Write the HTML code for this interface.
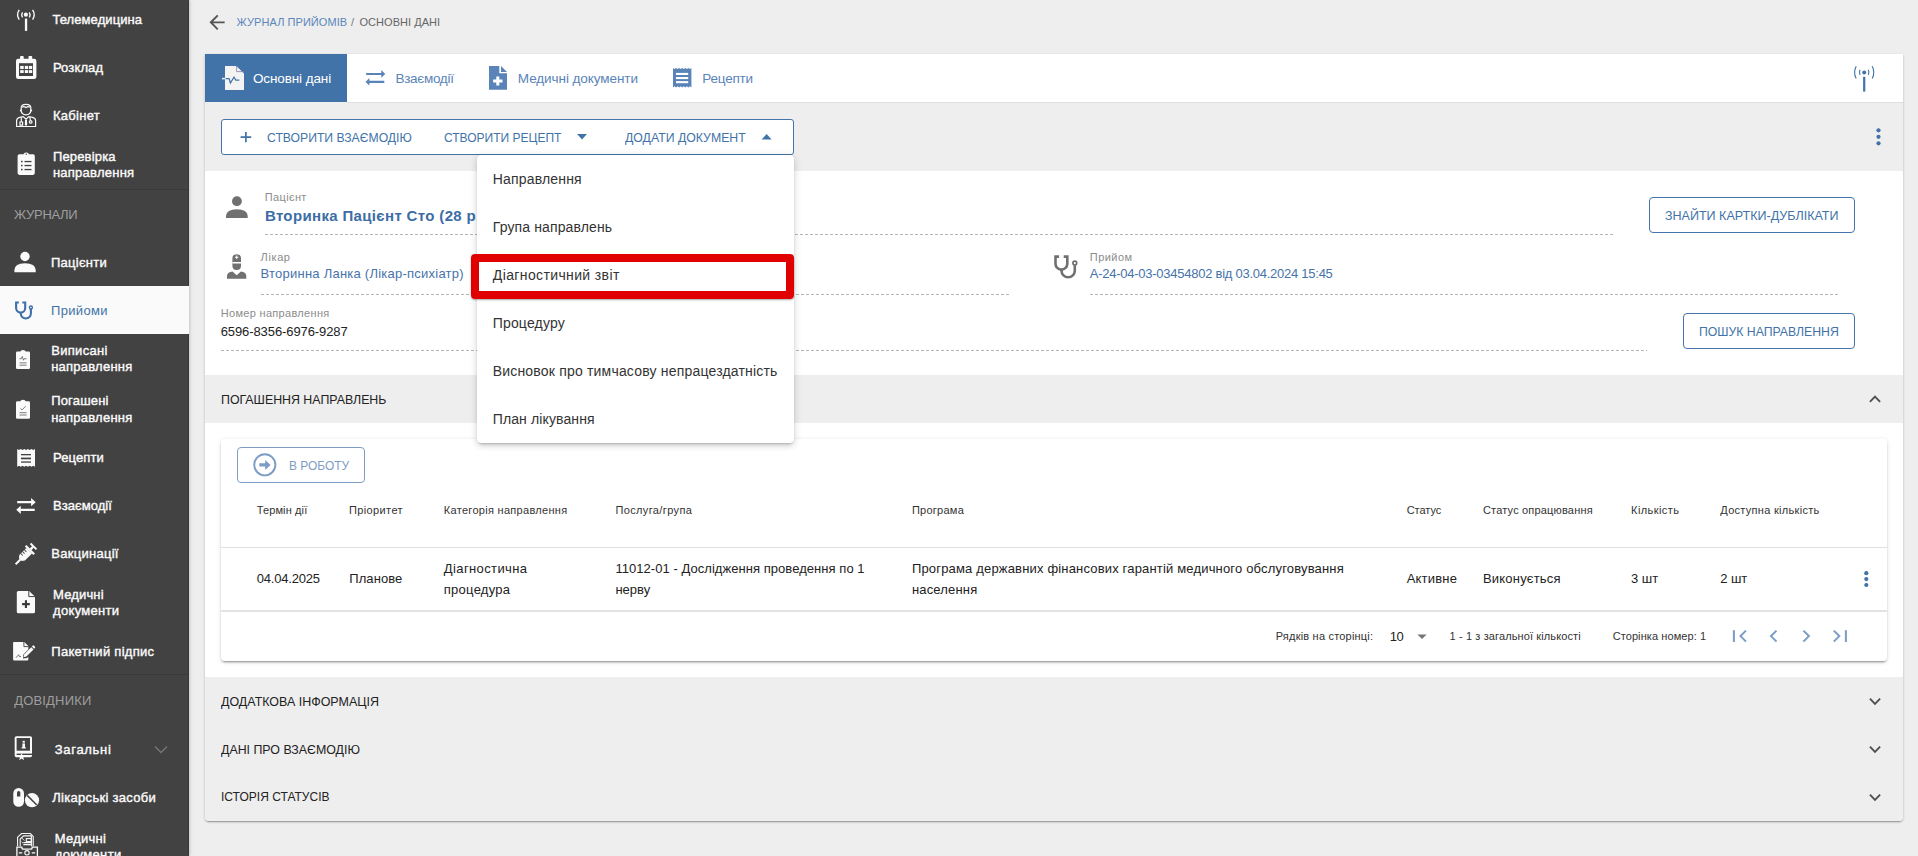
<!DOCTYPE html>
<html><head><meta charset="utf-8"><title>Основні дані</title>
<style>
html,body{margin:0;padding:0;width:1918px;height:856px;overflow:hidden;background:#eeeeee;font-family:"Liberation Sans",sans-serif;}
span{position:absolute;white-space:nowrap;}
.a{position:absolute;}
svg.a{overflow:visible;}
.dash{position:absolute;height:1px;background-image:linear-gradient(to right,#b5b5b5 0,#b5b5b5 3px,transparent 3px);background-size:5px 1px;background-repeat:repeat-x;}
</style></head><body>
<!-- ============ SIDEBAR ============ -->
<div class="a" style="left:0;top:0;width:189px;height:856px;background:#424242;box-shadow:1px 0 3px rgba(0,0,0,0.18);z-index:1"></div>
<div class="a" style="left:188px;top:0;width:1px;height:856px;background:#383838;z-index:1"></div>
<div class="a" style="left:0;top:189px;width:188px;height:1px;background:#393939;z-index:1"></div>
<div class="a" style="left:0;top:674px;width:188px;height:1px;background:#393939;z-index:1"></div>
<div class="a" style="left:0;top:286px;width:189px;height:48px;background:#fafafa;z-index:1"></div>
<svg class="a" style="left:0;top:0;z-index:2" width="189" height="856" viewBox="0 0 189 856">
 <g fill="#fafafa" stroke="none">
  <!-- antenna -->
  <circle cx="25.9" cy="14.7" r="2.1"/>
  <rect x="24.9" y="18.6" width="2.3" height="12.3"/>
 </g>
 <g fill="none" stroke="#fafafa" stroke-width="1.4">
  <path d="M22.5 12.3 Q20.9 14.8 22.5 17.3"/><path d="M29.3 12.3 Q30.9 14.8 29.3 17.3"/>
  <path d="M19.2 9.9 Q16 14.8 19.2 19.7"/><path d="M32.6 9.9 Q35.8 14.8 32.6 19.7"/>
 </g>
 <!-- calendar -->
 <g fill="#fafafa">
  <rect x="16" y="58.8" width="20.4" height="20.2" rx="2.3"/>
  <rect x="20.1" y="55.9" width="3.6" height="4" rx="0.8"/><rect x="28.5" y="55.9" width="3.7" height="4" rx="0.8"/>
 </g>
 <rect x="19" y="63.2" width="14" height="12.8" fill="#424242"/>
 <g fill="#fafafa">
  <rect x="20.2" y="65.9" width="3.5" height="3.1"/><rect x="24.8" y="65.9" width="3.2" height="3.1"/><rect x="28.8" y="65.9" width="3.4" height="3.1"/>
  <rect x="20.2" y="70.1" width="3.5" height="2.9"/><rect x="24.8" y="70.1" width="3.2" height="2.9"/><rect x="28.8" y="70.1" width="3.4" height="2.9"/>
 </g>
 <!-- doctor outline -->
 <g fill="none" stroke="#fafafa" stroke-width="1.2">
  <path d="M21.2 108.5 Q20.6 104.4 26 104.4 Q31.4 104.4 30.8 108.5 L30.8 110.5 Q30.6 114.6 26 114.9 Q21.4 114.6 21.2 110.5 Z"/>
  <path d="M22 107.2 Q24 105.8 26 107.6 Q28 105.8 30 107.2"/>
  <path d="M16.6 126.5 L16.6 120.8 Q16.8 117.8 20.5 117.2 L23.2 116.6 L26 119.2 L28.8 116.6 L31.5 117.2 Q35.6 117.8 35.6 120.8 L35.6 126.5 Z"/>
  <path d="M21.3 117.2 L21.3 121.5 M20 122 h2.6 v3.2 h-2.6z"/>
  <circle cx="30.7" cy="121.9" r="1.3"/>
  <path d="M29.8 117 L30.5 120.5"/>
 </g>
 <circle cx="20.8" cy="110.6" r="1" fill="#fafafa"/><circle cx="31.2" cy="110.6" r="1" fill="#fafafa"/>
 <path d="M25 119.8 L27 119.8 L27.2 124.8 L26 126 L24.8 124.8 Z" fill="#fafafa"/>
 <!-- clipboard list -->
 <rect x="17.6" y="154.3" width="17.2" height="20.6" rx="1.8" fill="#fafafa"/>
 <path d="M23.3 155.5 L24 153.6 Q24.6 152.4 26.2 152.4 Q27.8 152.4 28.4 153.6 L29.1 155.5 Z" fill="#fafafa"/>
 <circle cx="26.2" cy="154.3" r="0.7" fill="#424242"/>
 <g fill="#424242">
  <rect x="21" y="160.8" width="1.6" height="1.5"/><rect x="24.5" y="160.9" width="7" height="1.3"/>
  <rect x="21" y="164.8" width="1.6" height="1.5"/><rect x="24.5" y="164.9" width="7" height="1.3"/>
  <rect x="21" y="168.8" width="1.6" height="1.5"/><rect x="24.5" y="168.9" width="7" height="1.3"/>
 </g>
 <!-- person -->
 <circle cx="25" cy="256.5" r="4.7" fill="#fafafa"/>
 <path d="M14.4 272.3 L14.4 270 Q14.6 263.5 25 263.3 Q35.4 263.5 35.7 270 L35.7 272.3 Z" fill="#fafafa"/>
 <!-- stethoscope blue -->
 <g fill="none" stroke="#3f6fa9" stroke-width="2.1">
  <path d="M18.8 302.5 H16.1 V308 A4.55 4.55 0 0 0 25.2 308 V302.5 H22.4"/>
  <path d="M20.7 312.2 V313.35 A5.1 5.1 0 0 0 30.9 313.35 V309"/>
  <circle cx="30.9" cy="307.5" r="1.5" stroke-width="1.4"/>
 </g>
 <!-- clipboard pulse -->
 <rect x="16" y="351.6" width="14" height="17.4" rx="1.3" fill="#fafafa"/>
 <path d="M20 352.4 Q20.6 350 23 350 Q25.4 350 26 352.4 Z" fill="#fafafa"/>
 <g fill="none" stroke="#505050" stroke-width="0.75">
  <path d="M19.5 358.7 H21.3 L22.3 356.5 L23.5 360.2 L24.3 358.7 H26.5"/>
  <path d="M19.6 362.9 H26.6 M19.6 365.2 H26.6"/>
 </g>
 <!-- clipboard check -->
 <rect x="16" y="401.3" width="14" height="17.4" rx="1.3" fill="#fafafa"/>
 <path d="M20 402.1 Q20.6 399.8 23 399.8 Q25.4 399.8 26 402.1 Z" fill="#fafafa"/>
 <g fill="none" stroke="#505050" stroke-width="0.75">
  <path d="M20.4 408.3 L22 409.9 L25.7 406.2"/>
  <path d="M19.6 412.7 H26.6 M19.6 415 H26.6"/>
 </g>
 <!-- receipt -->
 <path d="M17.20 449.00 L18.98 450.00 L20.76 449.00 L22.54 450.00 L24.32 449.00 L26.10 450.00 L27.88 449.00 L29.66 450.00 L31.44 449.00 L33.22 450.00 L35.00 449.00 L35.00 466.70 L33.22 465.70 L31.44 466.70 L29.66 465.70 L27.88 466.70 L26.10 465.70 L24.32 466.70 L22.54 465.70 L20.76 466.70 L18.98 465.70 L17.20 466.70 Z" fill="#fafafa"/>
 <g fill="#424242"><rect x="21" y="454" width="10" height="1.3"/><rect x="21" y="457.6" width="10" height="1.7"/><rect x="21" y="461.4" width="10" height="1.3"/></g>
 <!-- swap -->
 <path d="M17.2 501 H31.1 V498 L35.7 502.15 L31.1 506.3 V503.3 H17.2 Z M34.7 508.7 H20.8 V505.7 L16.25 509.85 L20.8 514 V511 H34.7 Z" fill="#fafafa"/>
 <!-- syringe -->
 <g transform="translate(25.3 554.6) rotate(45)" fill="#fafafa">
  <path d="M-4 -5.5 H4 V4.5 L2 7 H-2 L-4 4.5 Z"/>
  <rect x="-6" y="-7.6" width="12" height="2.2"/>
  <rect x="-1.1" y="-11" width="2.2" height="3.6"/>
  <rect x="-4.2" y="-12.6" width="8.4" height="2"/>
  <rect x="-1" y="6.5" width="2" height="7.2"/>
  <g fill="#424242"><rect x="-4.2" y="-3.2" width="3" height="0.9"/><rect x="-4.2" y="-0.6" width="3" height="0.9"/><rect x="-4.2" y="2" width="3" height="0.9"/></g>
 </g>
 <!-- note add -->
 <path d="M18.3 591 H29.2 L35 596.8 V611.7 Q35 613.2 33.5 613.2 H18.3 Q16.8 613.2 16.8 611.7 V592.5 Q16.8 591 18.3 591 Z" fill="#fafafa"/>
 <path d="M28.8 591 V596.6 H35" fill="none" stroke="#424242" stroke-width="1"/>
 <path d="M24.9 600.3 H27 V603.1 H29.8 V605.2 H27 V608 H24.9 V605.2 H22.1 V603.1 H24.9 Z" fill="#3a3a3a"/>
 <!-- sign doc -->
 <path d="M13.9 642 H24.3 L28.3 646 V649.5 L23.3 654.5 L23 658.5 L27 658 L28.3 656.7 V659.6 Q28.3 660.4 27.5 660.4 H13.9 Q13.1 660.4 13.1 659.6 V642.8 Q13.1 642 13.9 642 Z" fill="#fafafa"/>
 <path d="M23.9 642 V646.6 H28.3" fill="none" stroke="#424242" stroke-width="0.9"/>
 <path d="M16 657.8 L17.8 655.5 L18.6 654.6 L19.5 656.8 L21 656.4" fill="none" stroke="#555" stroke-width="0.8"/>
 <path d="M24.2 654.3 L31.3 647.2 L33.5 649.4 L26.4 656.5 L23.5 657.3 Z" fill="#fafafa"/>
 <path d="M31.9 646.6 L32.9 645.6 Q33.4 645.1 33.9 645.6 L35 646.7 Q35.5 647.2 35 647.7 L34.1 648.8 Z" fill="#fafafa"/>
 <!-- book info -->
 <rect x="14.7" y="736.2" width="17.3" height="21" rx="1.6" fill="#fafafa"/>
 <rect x="16.6" y="738" width="13.4" height="12.7" fill="#424242"/>
 <rect x="16.6" y="753.6" width="15.4" height="1.4" fill="#424242"/>
 <rect x="22.6" y="740.8" width="2.2" height="1.9" fill="#fafafa"/><rect x="22.4" y="743.4" width="2.6" height="4.6" fill="#fafafa"/><rect x="21.6" y="747.2" width="4.2" height="1.3" fill="#fafafa"/>
 <path d="M21.6 753.2 L22.7 755.6 L25.2 755.8 L23.3 757.4 L24 760.2 L21.6 758.6 L19.2 760.2 L19.9 757.4 L18 755.8 L20.5 755.6 Z" fill="#fafafa"/>
 <!-- pills -->
 <rect x="13.3" y="788" width="10.7" height="18.8" rx="5.3" fill="#fafafa"/>
 <path d="M17 796.5 V792.6 Q17 790.9 18.65 790.9 Q20.3 790.9 20.3 792.6 V796.5 Z" fill="#424242"/>
 <circle cx="32" cy="800.2" r="7.1" fill="#fafafa"/>
 <path d="M27.2 795.4 L36.8 805" stroke="#424242" stroke-width="1.5"/>
 <!-- med docs -->
 <g fill="none" stroke="#fafafa" stroke-width="1.1">
  <path d="M17.6 846.3 V837.2 L21.6 833.5 H30.3 L33.2 836.4 V846.3"/>
  <path d="M20.2 846.3 V839 L23.6 835.9 H31.4 V846.3"/>
  <rect x="26.3" y="838.6" width="5" height="3"/>
  <path d="M23.3 842.6 H31 M23.3 844.6 H31"/>
  <path d="M16.9 856 V847.2 H21.8 Q21.8 849.2 23.6 849.2 H30.4 Q32.2 849.2 32.2 847.2 H37.4 V856" stroke-width="1.3"/>
  <circle cx="27" cy="852.8" r="2.2"/>
  <path d="M18.8 852.8 H22.2 M31.8 852.8 H35.2" stroke-width="1.3"/>
 </g>
 <path d="M22 838.3 L24.5 840.5 M21.5 841.8 L23 843.2" stroke="#fafafa" stroke-width="0.8"/>
 <!-- chevron Загальні -->
 <path d="M155 746.5 L161 752.4 L167 746.5" fill="none" stroke="#767676" stroke-width="1.4"/>
</svg>

<!-- ============ BREADCRUMB ============ -->
<svg class="a" style="left:205px;top:10px;z-index:2" width="24" height="24" viewBox="0 0 24 24"><path d="M20 11H7.83l5.59-5.59L12 4l-8 8 8 8 1.41-1.41L7.83 13H20v-2z" fill="#555" transform="translate(0.1 0.4) scale(0.95) translate(0.6 0.6)"/></svg>

<!-- ============ CARD ============ -->
<div class="a" style="left:205px;top:54px;width:1698px;height:767px;background:#ffffff;border-radius:0 0 4px 4px;box-shadow:0 1px 3px rgba(0,0,0,0.2),0 1px 1px rgba(0,0,0,0.14),0 2px 1px -1px rgba(0,0,0,0.12);z-index:1"></div>
<!-- tab bar bottom border -->
<div class="a" style="left:205px;top:54px;width:142px;height:48px;background:#4173a8;z-index:1"></div>
<!-- toolbar -->
<div class="a" style="left:205px;top:102px;width:1698px;height:69px;background:#eeeeee;z-index:1"></div>
<div class="a" style="left:347px;top:102px;width:1556px;height:1px;background:#e0e0e0;z-index:1"></div>

<div class="a" style="left:221px;top:119px;width:571px;height:34px;border:1px solid #4673aa;border-radius:3px;background:#fff;z-index:1"></div>
<!-- section header -->
<div class="a" style="left:205px;top:375px;width:1698px;height:48px;background:#eeeeee;z-index:1"></div>
<!-- inner card -->
<div class="a" style="left:221px;top:439px;width:1666px;height:222px;background:#fff;border-radius:4px;box-shadow:0 3px 1px -2px rgba(0,0,0,0.2),0 2px 2px 0 rgba(0,0,0,0.14),0 1px 5px 0 rgba(0,0,0,0.12);z-index:1"></div>
<div class="a" style="left:221px;top:547px;width:1666px;height:1px;background:#e0e0e0;z-index:1"></div>
<div class="a" style="left:221px;top:610px;width:1666px;height:2px;background:#e3e3e3;z-index:1"></div>
<div class="a" style="left:237px;top:447px;width:126px;height:34px;border:1px solid #7d9dc5;border-radius:4px;z-index:1"></div>
<!-- accordions -->
<div class="a" style="left:205px;top:677px;width:1698px;height:144px;background:#eeeeee;border-radius:0 0 4px 4px;z-index:1"></div>

<!-- dashed lines -->
<div class="dash" style="left:265px;top:234px;width:1348px;z-index:1"></div>
<div class="dash" style="left:261px;top:294px;width:749px;z-index:1"></div>
<div class="dash" style="left:1090px;top:294px;width:749px;z-index:1"></div>
<div class="dash" style="left:221px;top:350px;width:1426px;z-index:1"></div>
<!-- outlined buttons -->
<div class="a" style="left:1649px;top:197px;width:204px;height:34px;border:1px solid #4673aa;border-radius:4px;z-index:1"></div>
<div class="a" style="left:1683px;top:313px;width:170px;height:34px;border:1px solid #4673aa;border-radius:4px;z-index:1"></div>

<!-- main icons -->
<svg class="a" style="left:0;top:0;z-index:2" width="1918" height="856" viewBox="0 0 1918 856">
 <!-- tab: doc pulse -->
 <path d="M225 66 H236.4 L244 73.6 V90 H225 Z" fill="#f3f3f3"/>
 <path d="M236.6 66 V71.6 H244" fill="none" stroke="#8a7aa0" stroke-width="0.8"/>
 <path d="M225.3 78.6 H229.1 L230.4 83 L234 77.2 L235.8 80.1 H239.3" fill="none" stroke="#4173a8" stroke-width="1.2" stroke-linejoin="miter"/>
 <path d="M222 78.6 H225.3" fill="none" stroke="#f3f3f3" stroke-width="1.5"/>
 <!-- tab: swap -->
 <path d="M366.2 72.9 H381.3 V70 L385.2 73.9 L381.3 77.8 V75 H366.2 Z M384.3 80.8 H369.4 V78.1 L365.5 81.9 L369.4 85.6 V83 H384.3 Z" fill="#5a84b8"/>
 <!-- tab: note add -->
 <path d="M489 66.1 H499.3 V73.2 H507 V89.7 H489 Z" fill="#5a84b8"/>
 <path d="M501 66.1 L507 71.9 H501 Z" fill="#5a84b8"/>
 <path d="M496.3 76.6 H499.3 V79.6 H502.5 V82.6 H499.3 V85.6 H496.3 V82.6 H493.1 V79.6 H496.3 Z" fill="#fff"/>
 <!-- tab: receipt -->
 <path d="M673.00 68.00 L674.53 69.10 L676.07 68.00 L677.60 69.10 L679.13 68.00 L680.67 69.10 L682.20 68.00 L683.73 69.10 L685.27 68.00 L686.80 69.10 L688.33 68.00 L689.87 69.10 L691.40 68.00 L691.40 87.40 L689.87 86.30 L688.33 87.40 L686.80 86.30 L685.27 87.40 L683.73 86.30 L682.20 87.40 L680.67 86.30 L679.13 87.40 L677.60 86.30 L676.07 87.40 L674.53 86.30 L673.00 87.40 Z" fill="#5a84b8"/>
 <g fill="#fff"><rect x="676" y="72.9" width="12.2" height="2.1"/><rect x="676" y="77" width="12.2" height="2.1"/><rect x="676" y="81.1" width="12.2" height="2.1"/></g>
 <!-- antenna top right -->
 <circle cx="1864.2" cy="72.4" r="2" fill="#4173a8"/>
 <rect x="1863.1" y="76.8" width="2.2" height="14.8" fill="#4173a8"/>
 <g fill="none" stroke="#4173a8" stroke-width="1.1">
  <path d="M1860.1 69.8 Q1858.7 72.4 1860.1 75"/><path d="M1868.3 69.8 Q1869.7 72.4 1868.3 75"/>
  <path d="M1856.2 66.2 Q1852.9 72.4 1856.2 78.6"/><path d="M1872.2 66.2 Q1875.5 72.4 1872.2 78.6"/>
 </g>
 <!-- toolbar kebab -->
 <g fill="#4173a8"><circle cx="1878.5" cy="130.3" r="2.1"/><circle cx="1878.5" cy="136.8" r="2.1"/><circle cx="1878.5" cy="143.3" r="2.1"/></g>
 <!-- plus -->
 <path d="M245.9 131.9 V142.2 M240.6 137.05 H251.2" stroke="#4173a8" stroke-width="1.7"/>
 <!-- triangles -->
 <path d="M577 134 L587 134 L582 139.6 Z" fill="#4173a8"/>
 <path d="M761.6 139.6 L771.6 139.6 L766.6 134 Z" fill="#4173a8"/>
 <!-- gray person -->
 <circle cx="236.9" cy="201.2" r="4.9" fill="#707070"/>
 <path d="M226 218.1 V215.8 Q226.4 209.4 236.9 209.2 Q247.4 209.4 247.7 215.8 V218.1 Z" fill="#707070"/>
 <!-- gray doctor -->
 <path d="M232.4 258.5 Q232.4 254.3 236.7 254.3 Q241 254.3 241 258.5 V265.5 Q241 270 236.7 270 Q232.4 270 232.4 265.5 Z" fill="#707070"/>
 <rect x="232.4" y="262" width="8.6" height="1.5" fill="#fff"/>
 <path d="M236.2 255.6 h1 v1.2 h1.2 v1 h-1.2 v1.2 h-1 v-1.2 h-1.2 v-1 h1.2z" fill="#fff"/>
 <path d="M227 278.7 V275.8 Q227.5 272 232.5 271.6 L236.7 275.3 L240.9 271.6 Q245.9 272 246.3 275.8 V278.7 Z" fill="#707070"/>
 <!-- gray stethoscope -->
 <g fill="none" stroke="#707070" stroke-width="2.6">
  <path d="M1059 256.6 H1055.5 V263.7 A5.9 5.9 0 0 0 1067.3 263.7 V256.6 H1063.7"/>
  <path d="M1061.5 269.5 V270.65 A6.65 6.65 0 0 0 1074.8 270.65 V265"/>
  <circle cx="1074.8" cy="263.1" r="1.9" stroke-width="1.7"/>
 </g>
 <!-- section chevron up -->
 <path d="M1869.9 401.8 L1875 396.7 L1880.1 401.8" fill="none" stroke="#505050" stroke-width="1.9"/>
 <!-- arrow circle -->
 <circle cx="264.8" cy="464.8" r="10.6" fill="none" stroke="#7d9dc5" stroke-width="1.9"/>
 <path d="M259.3 463.2 H265.2 V459.9 L270.6 464.9 L265.2 470 V466.6 H259.3 Z" fill="#7d9dc5"/>
 <!-- row kebab -->
 <g fill="#4173a8"><circle cx="1866.3" cy="573.2" r="2.1"/><circle cx="1866.3" cy="579.1" r="2.1"/><circle cx="1866.3" cy="585" r="2.1"/></g>
 <!-- pagination triangle -->
 <path d="M1417.4 634.5 L1426.7 634.5 L1422 638.9 Z" fill="#757575"/>
 <!-- pagination icons -->
 <g fill="none" stroke="#7d9dc5" stroke-width="2.05">
  <path d="M1733.9 630.2 V642"/><path d="M1746 630.6 L1740.5 636.1 L1746 641.6"/>
  <path d="M1776.5 630.6 L1771 636.1 L1776.5 641.6"/>
  <path d="M1803.4 630.6 L1808.9 636.1 L1803.4 641.6"/>
  <path d="M1833.8 630.6 L1839.3 636.1 L1833.8 641.6"/><path d="M1845.9 630.2 V642"/>
 </g>
 <!-- accordion chevrons -->
 <g fill="none" stroke="#505050" stroke-width="1.9">
  <path d="M1869.9 698.7 L1875 703.8 L1880.1 698.7"/>
  <path d="M1869.9 746.7 L1875 751.8 L1880.1 746.7"/>
  <path d="M1869.9 794.7 L1875 799.8 L1880.1 794.7"/>
 </g>
</svg>

<!-- ============ MENU ============ -->
<div class="a" style="left:477px;top:155px;width:317px;height:288px;background:#fff;border-radius:4px;box-shadow:0 3px 3px -2px rgba(0,0,0,0.22),0 3px 6px 0 rgba(0,0,0,0.10),0 1px 8px 1px rgba(0,0,0,0.08),0 0 1px rgba(0,0,0,0.18);z-index:10"></div>
<div class="a" style="left:471px;top:254px;width:307px;height:29px;border:8px solid #e00000;border-radius:4px;box-shadow:0 1px 2px rgba(0,0,0,0.35);z-index:12"></div>

<span id="t0" style="left:52.40px;top:12.90px;font-size:13px;line-height:13px;color:#fafafa;-webkit-text-stroke:0.4px #fafafa;letter-spacing:0.094px;z-index:2">Телемедицина</span>
<span id="t1" style="left:52.90px;top:61.40px;font-size:13px;line-height:13px;color:#fafafa;-webkit-text-stroke:0.4px #fafafa;letter-spacing:0.130px;z-index:2">Розклад</span>
<span id="t2" style="left:52.90px;top:109.40px;font-size:13px;line-height:13px;color:#fafafa;-webkit-text-stroke:0.4px #fafafa;letter-spacing:0.289px;z-index:2">Кабінет</span>
<span id="t3" style="left:52.90px;top:149.80px;font-size:13px;line-height:13px;color:#fafafa;-webkit-text-stroke:0.4px #fafafa;letter-spacing:0.170px;z-index:2">Перевірка</span>
<span id="t4" style="left:52.90px;top:166.30px;font-size:13px;line-height:13px;color:#fafafa;-webkit-text-stroke:0.4px #fafafa;letter-spacing:0.251px;z-index:2">направлення</span>
<span id="t5" style="left:51.00px;top:256.30px;font-size:13px;line-height:13px;color:#fafafa;-webkit-text-stroke:0.4px #fafafa;letter-spacing:0.245px;z-index:2">Пацієнти</span>
<span id="t6" style="left:51.20px;top:344.10px;font-size:13px;line-height:13px;color:#fafafa;-webkit-text-stroke:0.4px #fafafa;letter-spacing:0.309px;z-index:2">Виписані</span>
<span id="t7" style="left:51.20px;top:360.40px;font-size:13px;line-height:13px;color:#fafafa;-webkit-text-stroke:0.4px #fafafa;letter-spacing:0.233px;z-index:2">направлення</span>
<span id="t8" style="left:51.20px;top:394.00px;font-size:13px;line-height:13px;color:#fafafa;-webkit-text-stroke:0.4px #fafafa;letter-spacing:0.175px;z-index:2">Погашені</span>
<span id="t9" style="left:51.20px;top:410.90px;font-size:13px;line-height:13px;color:#fafafa;-webkit-text-stroke:0.4px #fafafa;letter-spacing:0.233px;z-index:2">направлення</span>
<span id="t10" style="left:53.00px;top:451.00px;font-size:13px;line-height:13px;color:#fafafa;-webkit-text-stroke:0.4px #fafafa;letter-spacing:0.111px;z-index:2">Рецепти</span>
<span id="t11" style="left:53.10px;top:499.40px;font-size:13px;line-height:13px;color:#fafafa;-webkit-text-stroke:0.4px #fafafa;letter-spacing:0.037px;z-index:2">Взаємодії</span>
<span id="t12" style="left:51.30px;top:547.30px;font-size:13px;line-height:13px;color:#fafafa;-webkit-text-stroke:0.4px #fafafa;letter-spacing:0.274px;z-index:2">Вакцинації</span>
<span id="t13" style="left:53.10px;top:588.20px;font-size:13px;line-height:13px;color:#fafafa;-webkit-text-stroke:0.4px #fafafa;letter-spacing:0.142px;z-index:2">Медичні</span>
<span id="t14" style="left:53.10px;top:604.00px;font-size:13px;line-height:13px;color:#fafafa;-webkit-text-stroke:0.4px #fafafa;letter-spacing:0.302px;z-index:2">документи</span>
<span id="t15" style="left:51.30px;top:645.40px;font-size:13px;line-height:13px;color:#fafafa;-webkit-text-stroke:0.4px #fafafa;letter-spacing:0.287px;z-index:2">Пакетний підпис</span>
<span id="t16" style="left:54.80px;top:743.10px;font-size:13px;line-height:13px;color:#fafafa;-webkit-text-stroke:0.4px #fafafa;letter-spacing:0.687px;z-index:2">Загальні</span>
<span id="t17" style="left:52.20px;top:791.20px;font-size:13px;line-height:13px;color:#fafafa;-webkit-text-stroke:0.4px #fafafa;letter-spacing:0.307px;z-index:2">Лікарські засоби</span>
<span id="t18" style="left:54.80px;top:831.80px;font-size:13px;line-height:13px;color:#fafafa;-webkit-text-stroke:0.4px #fafafa;letter-spacing:0.256px;z-index:2">Медичні</span>
<span id="t19" style="left:54.80px;top:847.60px;font-size:13px;line-height:13px;color:#fafafa;-webkit-text-stroke:0.4px #fafafa;letter-spacing:0.358px;z-index:2">документи</span>
<span id="t20" style="left:14.10px;top:208.10px;font-size:13px;line-height:13px;color:#9e9e9e;letter-spacing:-0.308px;z-index:2">ЖУРНАЛИ</span>
<span id="t21" style="left:14.20px;top:694.20px;font-size:13px;line-height:13px;color:#9e9e9e;letter-spacing:0.183px;z-index:2">ДОВІДНИКИ</span>
<span id="t22" style="left:51.00px;top:304.20px;font-size:13px;line-height:13px;color:#4173a8;letter-spacing:0.338px;z-index:2">Прийоми</span>
<span id="t23" style="left:236.60px;top:17.10px;font-size:11px;line-height:11px;color:#5b87bd;letter-spacing:0.060px;z-index:2">ЖУРНАЛ ПРИЙОМІВ</span>
<span id="t24" style="left:350.90px;top:17.10px;font-size:11px;line-height:11px;color:#777;letter-spacing:0.000px;z-index:2">/</span>
<span id="t25" style="left:359.50px;top:17.10px;font-size:11px;line-height:11px;color:#666;letter-spacing:0.034px;z-index:2">ОСНОВНІ ДАНІ</span>
<span id="t26" style="left:252.90px;top:71.50px;font-size:13.5px;line-height:14px;color:#ffffff;letter-spacing:-0.103px;z-index:2">Основні дані</span>
<span id="t27" style="left:395.40px;top:71.50px;font-size:13.5px;line-height:14px;color:#5a84b8;letter-spacing:-0.269px;z-index:2">Взаємодії</span>
<span id="t28" style="left:517.80px;top:71.50px;font-size:13.5px;line-height:14px;color:#5a84b8;letter-spacing:-0.069px;z-index:2">Медичні документи</span>
<span id="t29" style="left:702.20px;top:71.50px;font-size:13.5px;line-height:14px;color:#5a84b8;letter-spacing:-0.178px;z-index:2">Рецепти</span>
<span id="t30" style="left:266.90px;top:130.50px;font-size:13.5px;line-height:14px;color:#4173a8;transform:scaleX(0.9026);transform-origin:0 0;letter-spacing:0.000px;z-index:2">СТВОРИТИ ВЗАЄМОДІЮ</span>
<span id="t31" style="left:444.00px;top:130.50px;font-size:13.5px;line-height:14px;color:#4173a8;transform:scaleX(0.8896);transform-origin:0 0;letter-spacing:0.000px;z-index:2">СТВОРИТИ РЕЦЕПТ</span>
<span id="t32" style="left:625.30px;top:130.50px;font-size:13.5px;line-height:14px;color:#4173a8;transform:scaleX(0.9101);transform-origin:0 0;letter-spacing:0.000px;z-index:2">ДОДАТИ ДОКУМЕНТ</span>
<span id="t33" style="left:264.80px;top:191.70px;font-size:11px;line-height:11px;color:#8c8c8c;letter-spacing:0.343px;z-index:2">Пацієнт</span>
<span id="t34" style="left:264.90px;top:207.90px;font-size:15px;line-height:15px;color:#3d6da5;font-weight:700;letter-spacing:0.350px;z-index:2">Вторинка Пацієнт Сто (28 р.)</span>
<span id="t35" style="left:260.60px;top:251.50px;font-size:11px;line-height:11px;color:#8c8c8c;letter-spacing:0.609px;z-index:2">Лікар</span>
<span id="t36" style="left:260.60px;top:267.00px;font-size:13px;line-height:13px;color:#4673aa;letter-spacing:0.236px;z-index:2">Вторинна Ланка (Лікар-психіатр)</span>
<span id="t37" style="left:1089.80px;top:251.70px;font-size:11px;line-height:11px;color:#8c8c8c;letter-spacing:0.467px;z-index:2">Прийом</span>
<span id="t38" style="left:1089.80px;top:267.10px;font-size:13px;line-height:13px;color:#4673aa;letter-spacing:-0.256px;z-index:2">А-24-04-03-03454802 від 03.04.2024 15:45</span>
<span id="t39" style="left:220.70px;top:307.70px;font-size:11px;line-height:11px;color:#8c8c8c;letter-spacing:0.315px;z-index:2">Номер направлення</span>
<span id="t40" style="left:220.70px;top:324.90px;font-size:13px;line-height:13px;color:#222;letter-spacing:-0.093px;z-index:2">6596-8356-6976-9287</span>
<span id="t41" style="left:1665.20px;top:208.70px;font-size:13.5px;line-height:14px;color:#4173a8;transform:scaleX(0.9278);transform-origin:0 0;letter-spacing:0.000px;z-index:2">ЗНАЙТИ КАРТКИ-ДУБЛІКАТИ</span>
<span id="t42" style="left:1698.90px;top:324.50px;font-size:13.5px;line-height:14px;color:#4173a8;transform:scaleX(0.9069);transform-origin:0 0;letter-spacing:0.000px;z-index:2">ПОШУК НАПРАВЛЕННЯ</span>
<span id="t43" style="left:220.80px;top:392.70px;font-size:13.5px;line-height:14px;color:#222;transform:scaleX(0.9152);transform-origin:0 0;letter-spacing:0.000px;z-index:2">ПОГАШЕННЯ НАПРАВЛЕНЬ</span>
<span id="t44" style="left:288.90px;top:458.50px;font-size:13.5px;line-height:14px;color:#7d9dc5;transform:scaleX(0.8853);transform-origin:0 0;letter-spacing:0.000px;z-index:2">В РОБОТУ</span>
<span id="t45" style="left:256.70px;top:504.80px;font-size:11px;line-height:11px;color:#333;letter-spacing:0.129px;z-index:2">Термін дії</span>
<span id="t46" style="left:348.90px;top:504.80px;font-size:11px;line-height:11px;color:#333;letter-spacing:0.393px;z-index:2">Пріоритет</span>
<span id="t47" style="left:443.80px;top:504.80px;font-size:11px;line-height:11px;color:#333;letter-spacing:0.300px;z-index:2">Категорія направлення</span>
<span id="t48" style="left:615.40px;top:504.80px;font-size:11px;line-height:11px;color:#333;letter-spacing:0.372px;z-index:2">Послуга/група</span>
<span id="t49" style="left:911.90px;top:504.80px;font-size:11px;line-height:11px;color:#333;letter-spacing:0.265px;z-index:2">Програма</span>
<span id="t50" style="left:1406.70px;top:504.80px;font-size:11px;line-height:11px;color:#333;letter-spacing:-0.030px;z-index:2">Статус</span>
<span id="t51" style="left:1483.00px;top:504.80px;font-size:11px;line-height:11px;color:#333;letter-spacing:0.176px;z-index:2">Статус опрацювання</span>
<span id="t52" style="left:1631.10px;top:504.80px;font-size:11px;line-height:11px;color:#333;letter-spacing:0.419px;z-index:2">Кількість</span>
<span id="t53" style="left:1720.30px;top:504.80px;font-size:11px;line-height:11px;color:#333;letter-spacing:0.294px;z-index:2">Доступна кількість</span>
<span id="t54" style="left:256.80px;top:571.90px;font-size:13px;line-height:13px;color:#222;letter-spacing:-0.208px;z-index:2">04.04.2025</span>
<span id="t55" style="left:349.30px;top:571.90px;font-size:13px;line-height:13px;color:#222;letter-spacing:0.062px;z-index:2">Планове</span>
<span id="t56" style="left:443.80px;top:561.90px;font-size:13px;line-height:13px;color:#222;letter-spacing:0.393px;z-index:2">Діагностична</span>
<span id="t57" style="left:443.80px;top:583.00px;font-size:13px;line-height:13px;color:#222;letter-spacing:0.260px;z-index:2">процедура</span>
<span id="t58" style="left:615.40px;top:561.90px;font-size:13px;line-height:13px;color:#222;letter-spacing:0.049px;z-index:2">11012-01 - Дослідження проведення по 1</span>
<span id="t59" style="left:615.40px;top:583.00px;font-size:13px;line-height:13px;color:#222;letter-spacing:0.000px;z-index:2">нерву</span>
<span id="t60" style="left:911.90px;top:561.90px;font-size:13px;line-height:13px;color:#222;letter-spacing:0.173px;z-index:2">Програма державних фінансових гарантій медичного обслуговування</span>
<span id="t61" style="left:911.90px;top:583.00px;font-size:13px;line-height:13px;color:#222;letter-spacing:0.175px;z-index:2">населення</span>
<span id="t62" style="left:1406.70px;top:571.90px;font-size:13px;line-height:13px;color:#222;letter-spacing:0.208px;z-index:2">Активне</span>
<span id="t63" style="left:1483.00px;top:571.90px;font-size:13px;line-height:13px;color:#222;letter-spacing:0.193px;z-index:2">Виконується</span>
<span id="t64" style="left:1631.00px;top:571.90px;font-size:13px;line-height:13px;color:#222;letter-spacing:-0.034px;z-index:2">3 шт</span>
<span id="t65" style="left:1720.20px;top:571.90px;font-size:13px;line-height:13px;color:#222;letter-spacing:-0.059px;z-index:2">2 шт</span>
<span id="t66" style="left:1275.70px;top:630.80px;font-size:11px;line-height:11px;color:#333;letter-spacing:0.203px;z-index:2">Рядків на сторінці:</span>
<span id="t67" style="left:1389.70px;top:630.00px;font-size:13px;line-height:13px;color:#222;letter-spacing:-0.334px;z-index:2">10</span>
<span id="t68" style="left:1449.60px;top:630.80px;font-size:11px;line-height:11px;color:#333;letter-spacing:0.114px;z-index:2">1 - 1 з загальної кількості</span>
<span id="t69" style="left:1612.70px;top:630.80px;font-size:11px;line-height:11px;color:#333;letter-spacing:0.085px;z-index:2">Сторінка номер: 1</span>
<span id="t70" style="left:220.50px;top:694.80px;font-size:13.5px;line-height:14px;color:#222;transform:scaleX(0.9230);transform-origin:0 0;letter-spacing:0.000px;z-index:2">ДОДАТКОВА ІНФОРМАЦІЯ</span>
<span id="t71" style="left:220.50px;top:742.60px;font-size:13.5px;line-height:14px;color:#222;transform:scaleX(0.9170);transform-origin:0 0;letter-spacing:0.000px;z-index:2">ДАНІ ПРО ВЗАЄМОДІЮ</span>
<span id="t72" style="left:220.50px;top:790.30px;font-size:13.5px;line-height:14px;color:#222;transform:scaleX(0.8906);transform-origin:0 0;letter-spacing:0.000px;z-index:2">ІСТОРІЯ СТАТУСІВ</span>
<span id="t73" style="left:492.80px;top:172.10px;font-size:14px;line-height:14px;color:#333;letter-spacing:0.166px;z-index:11">Направлення</span>
<span id="t74" style="left:492.80px;top:220.40px;font-size:14px;line-height:14px;color:#333;letter-spacing:0.122px;z-index:11">Група направлень</span>
<span id="t75" style="left:492.80px;top:268.00px;font-size:14px;line-height:14px;color:#333;letter-spacing:0.374px;z-index:11">Діагностичний звіт</span>
<span id="t76" style="left:492.70px;top:316.40px;font-size:14px;line-height:14px;color:#333;letter-spacing:0.175px;z-index:11">Процедуру</span>
<span id="t77" style="left:492.70px;top:364.30px;font-size:14px;line-height:14px;color:#333;letter-spacing:0.191px;z-index:11">Висновок про тимчасову непрацездатність</span>
<span id="t78" style="left:492.70px;top:412.00px;font-size:14px;line-height:14px;color:#333;letter-spacing:0.128px;z-index:11">План лікування</span>
</body></html>
